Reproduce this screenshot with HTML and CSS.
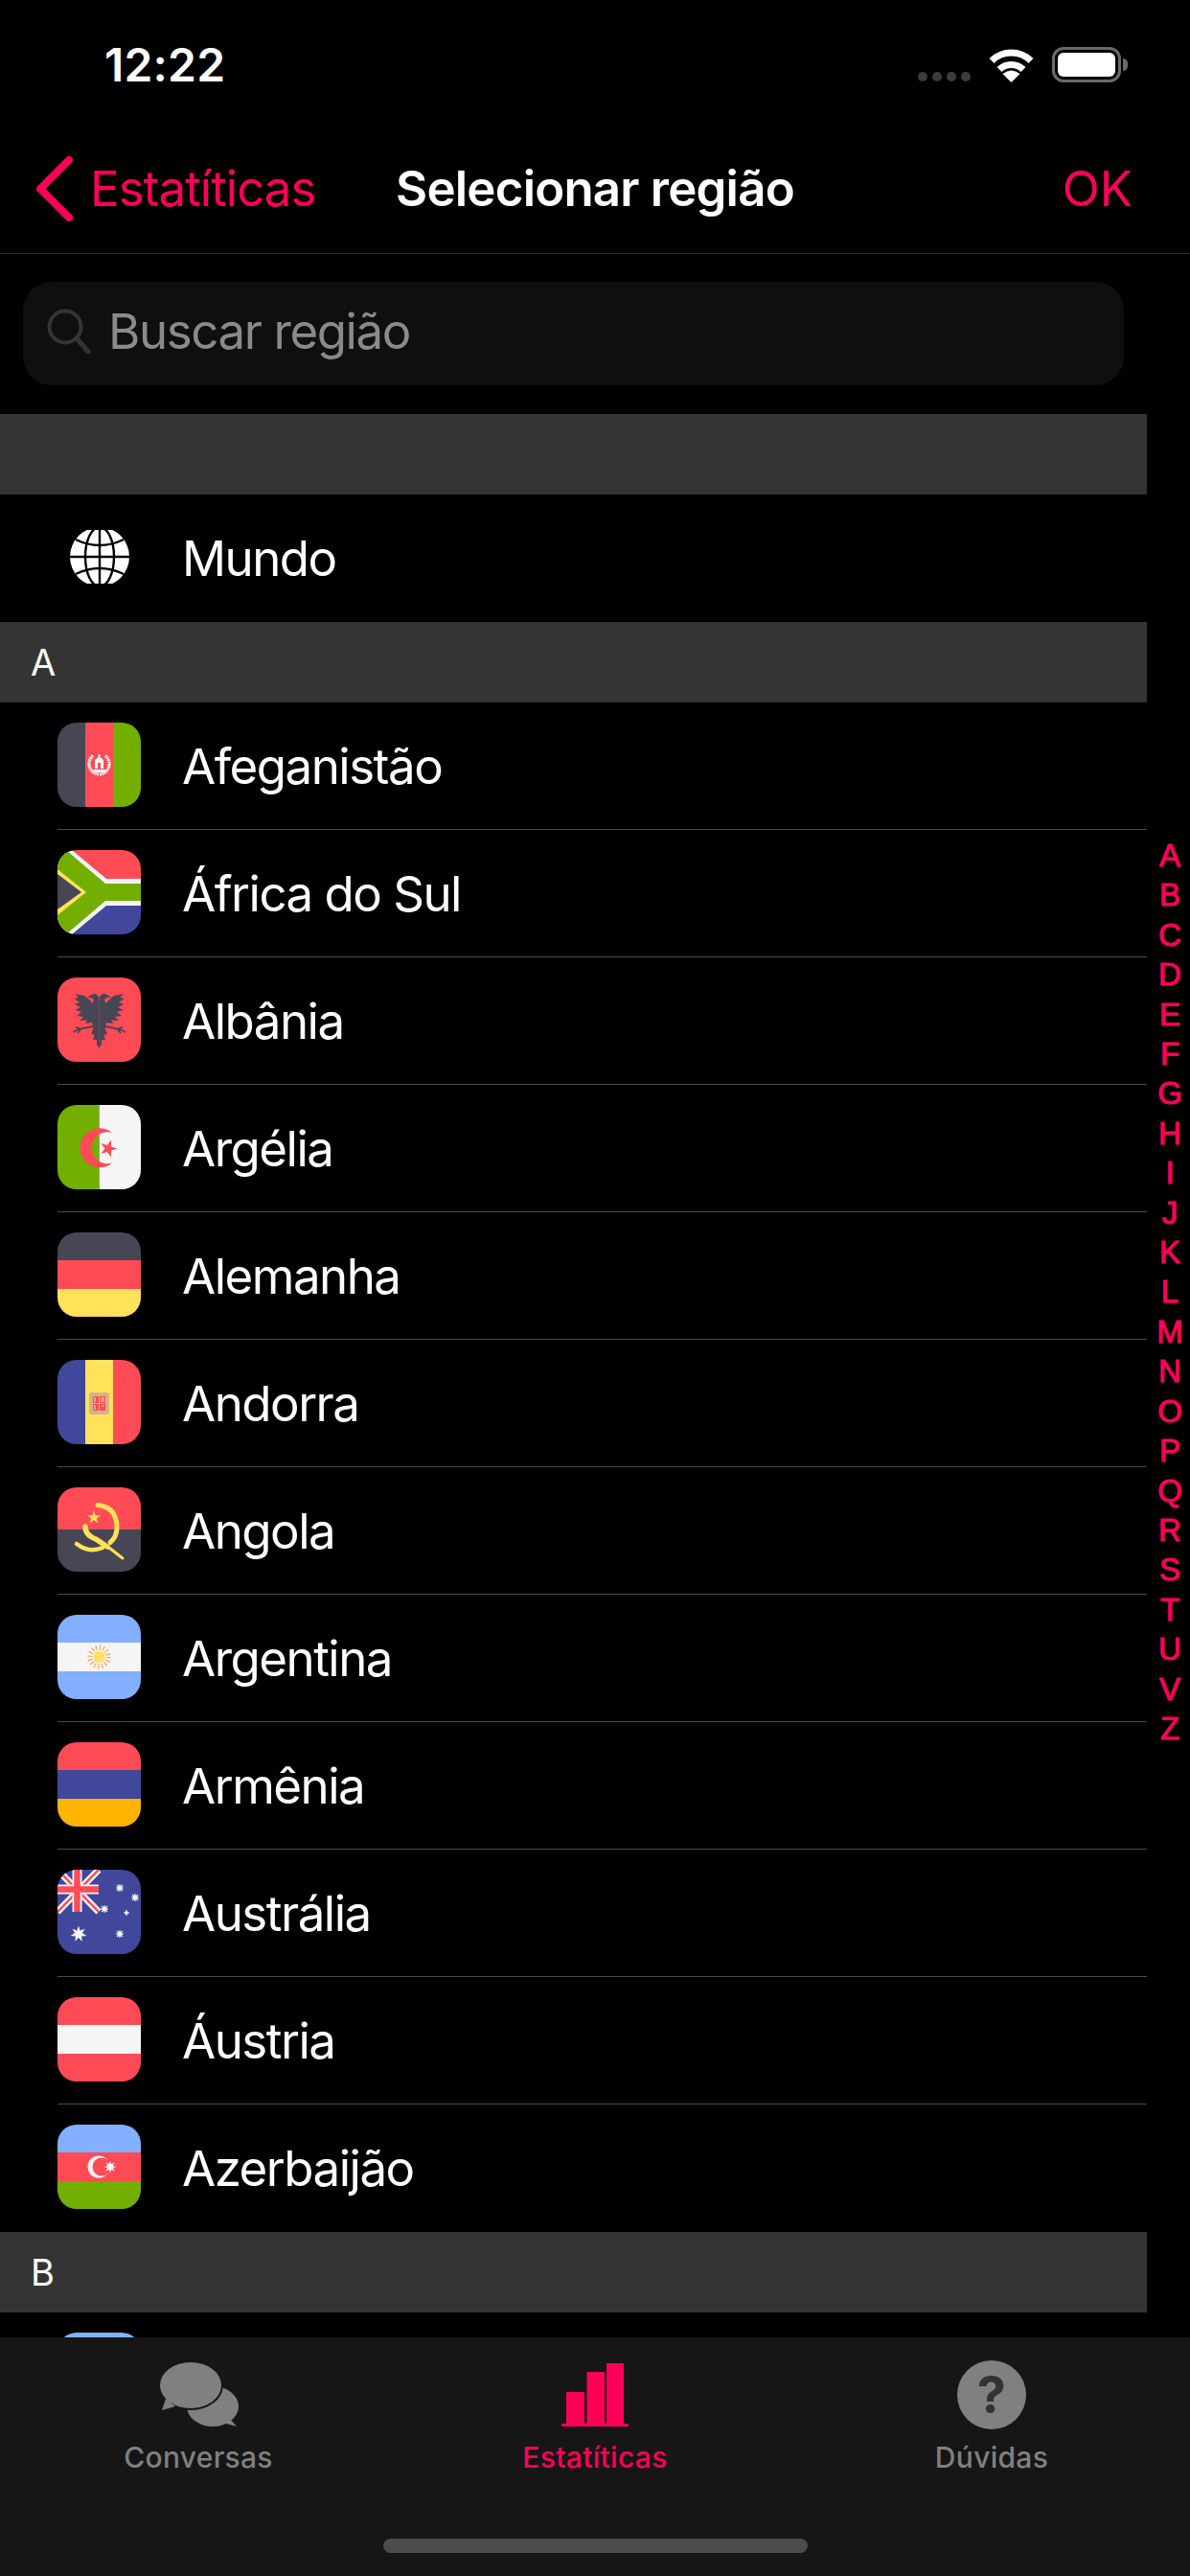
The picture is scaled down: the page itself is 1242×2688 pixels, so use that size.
FILE: index.html
```html
<!DOCTYPE html>
<html lang="pt-BR">
<head>
  <meta charset="UTF-8">
  <title>Selecionar região</title>
  <link rel="stylesheet" href="styles.css">
</head>
<body>
  <div class="screen">
    <div class="status-bar">
      <span class="time">12:22</span>
      <div class="status-icons">
        <div class="signal"><i></i><i></i><i></i><i></i></div>
        <svg class="wifi" viewBox="0 0 47 36" width="47" height="36">
          <path d="M3 13.5a29 29 0 0 1 41 0" fill="none" stroke="#fff" stroke-width="7"/>
          <path d="M11 22.5a18 18 0 0 1 25 0" fill="none" stroke="#fff" stroke-width="7"/>
          <path d="M23.5 36l-9-9q9-7 18 0z" fill="#fff"/>
        </svg>
        <div class="battery"><div class="battery-level"></div></div>
        <div class="battery-nub"></div>
      </div>
    </div>

    <header class="nav">
      <a class="nav-back">
        <svg viewBox="0 0 44 70" width="44" height="70">
          <path d="M36 5L6 35l30 30" fill="none" stroke="#ff0058" stroke-width="8" stroke-linecap="round" stroke-linejoin="round"/>
        </svg>
        <span>Estatíticas</span>
      </a>
      <h1 class="nav-title">Selecionar região</h1>
      <a class="nav-ok">OK</a>
    </header>

    <div class="search">
      <svg viewBox="0 0 46 48" width="46" height="48">
        <circle cx="19" cy="19" r="16.5" fill="none" stroke="#343436" stroke-width="4"/>
        <path d="M31 31l12 14" fill="none" stroke="#343436" stroke-width="5" stroke-linecap="round"/>
      </svg>
      <span>Buscar região</span>
    </div>

    <main class="list">
      <div class="section-head"></div>
      <div class="row row-last">
        <div class="flag-cell">
          <svg class="globe" viewBox="0 0 62 56" width="62" height="56">
            <circle cx="31" cy="28" r="31" fill="#fff"/>
            <g fill="none" stroke="#000" stroke-width="2.4">
              <path d="M31 0v56M0 28h62"/>
              <ellipse cx="31" cy="28" rx="15" ry="31"/>
              <path d="M6 10q25 12 50 0M6 46q25-12 50 0"/>
            </g>
          </svg>
        </div>
        <span class="row-name">Mundo</span>
      </div>

      <div class="section-head">A</div>

      <div class="row">
        <svg class="flag" viewBox="0 0 87 88">
          <rect width="29" height="88" fill="#464655"/>
          <rect x="29" width="29" height="88" fill="#ff4b55"/>
          <rect x="58" width="29" height="88" fill="#73af00"/>
          <path d="M37 34.5a11 11 0 0 0 6 19.5M50 34.5a11 11 0 0 1-6 19.5" fill="none" stroke="#f5f5f5" stroke-width="3.2" stroke-dasharray="1.8 .6"/>
          <path d="M42.5 33h2v3l3.5 3v9h-9v-9l3.5-3zM37 49h13v3H37z" fill="#f5f5f5"/>
          <rect x="42" y="42" width="3" height="6" fill="#ff4b55"/>
        </svg>
        <span class="row-name">Afeganistão</span>
      </div>

      <div class="row">
        <svg class="flag" viewBox="0 0 87 88">
          <rect width="87" height="44" fill="#ff4b55"/>
          <rect y="44" width="87" height="44" fill="#41479b"/>
          <polygon points="0,0 15,0 51,30 87,30 87,58 51,58 15,88 0,88" fill="#f5f5f5"/>
          <polygon points="0,0 9,0 50,35 87,35 87,53 50,53 9,88 0,88" fill="#73af00"/>
          <polygon points="0,20 30,44 0,68" fill="#ffe15a"/>
          <polygon points="0,25 25,44 0,62" fill="#464655"/>
        </svg>
        <span class="row-name">África do Sul</span>
      </div>

      <div class="row">
        <svg class="flag" viewBox="0 0 87 88">
          <rect width="87" height="88" fill="#ff4b55"/>
          <g id="eagle-half">
            <polygon points="43.5,24 43,20 40,17 36,17.5 31,21 35.5,21 38,23 37,27 33,23 28,19 18,17 22,21 17.5,22 23,26 17.5,28 24,31 18.5,34 25,36 20,40 27,41 23,45 31,44.5 28.5,48 36,47 37.5,53 35,59 38.5,59.5 37,65 41,65 41,70 43.5,74" fill="#464655"/>
            <path d="M37 51L22 54l-6 3M24 53.5l-5-1.5M24 54l-3 4" fill="none" stroke="#464655" stroke-width="1.8"/>
          </g>
          <use href="#eagle-half" transform="translate(87 0) scale(-1 1)"/>
        </svg>
        <span class="row-name">Albânia</span>
      </div>

      <div class="row">
        <svg class="flag" viewBox="0 0 87 88">
          <rect width="43.5" height="88" fill="#73af00"/>
          <rect x="43.5" width="43.5" height="88" fill="#f5f5f5"/>
          <path d="M57 29a20.5 20.5 0 1 0 0 31.5a16.5 16.5 0 1 1 0-31.5z" fill="#ff4b55"/>
          <polygon transform="translate(53 45.5) rotate(90) scale(9.5)" points="0,-1 .22,-.31 .95,-.31 .36,.12 .59,.81 0,.38 -.59,.81 -.36,.12 -.95,-.31 -.22,-.31" fill="#ff4b55"/>
        </svg>
        <span class="row-name">Argélia</span>
      </div>

      <div class="row">
        <svg class="flag" viewBox="0 0 87 88">
          <rect width="87" height="29" fill="#464655"/>
          <rect y="29" width="87" height="30" fill="#ff4b55"/>
          <rect y="59" width="87" height="29" fill="#ffe15a"/>
        </svg>
        <span class="row-name">Alemanha</span>
      </div>

      <div class="row">
        <svg class="flag" viewBox="0 0 87 88">
          <rect width="29" height="88" fill="#41479b"/>
          <rect x="29" width="29" height="88" fill="#ffe15a"/>
          <rect x="58" width="29" height="88" fill="#ff4b55"/>
          <rect x="33" y="34" width="21" height="23" rx="3" fill="#d2b48c"/>
          <rect x="37" y="38" width="6" height="7" fill="#ff4b55"/>
          <rect x="44" y="38" width="6" height="7" fill="#ff4b55"/>
          <rect x="37" y="46" width="6" height="7" fill="#ff4b55"/>
          <rect x="44" y="46" width="6" height="7" fill="#ff4b55"/>
          <path d="M39 39v5M46 39v5M48 39v5M39 47v5M46 48h3" stroke="#ffe15a" stroke-width="1.2"/>
        </svg>
        <span class="row-name">Andorra</span>
      </div>

      <div class="row">
        <svg class="flag" viewBox="0 0 87 88">
          <rect width="87" height="44" fill="#ff4b55"/>
          <rect y="44" width="87" height="44" fill="#464655"/>
          <polygon transform="translate(38 31.5) scale(7.5)" points="0,-1 .22,-.31 .95,-.31 .36,.12 .59,.81 0,.38 -.59,.81 -.36,.12 -.95,-.31 -.22,-.31" fill="#ffe15a"/>
          <g fill="none" stroke="#ffe15a" stroke-linecap="round">
            <path d="M42 18.5q20 2 20 24 0 9-7 15" stroke-width="5"/>
            <path d="M20 59q13 10 27 4" stroke-width="4.5"/>
            <path d="M29 41q0 9 11 13l12 8" stroke-width="5.5"/>
            <path d="M50 60l18 14" stroke-width="3"/>
          </g>
        </svg>
        <span class="row-name">Angola</span>
      </div>

      <div class="row">
        <svg class="flag" viewBox="0 0 87 88">
          <rect width="87" height="88" fill="#82afff"/>
          <rect y="29" width="87" height="30" fill="#f5f5f5"/>
          <circle cx="43.5" cy="44" r="9.5" fill="none" stroke="#ff9f4d" stroke-width="5.5" stroke-dasharray="1.1 2.63"/>
          <circle cx="43.5" cy="44" r="6" fill="#ffe15a"/>
        </svg>
        <span class="row-name">Argentina</span>
      </div>

      <div class="row">
        <svg class="flag" viewBox="0 0 87 88">
          <rect width="87" height="29" fill="#ff4b55"/>
          <rect y="29" width="87" height="30" fill="#41479b"/>
          <rect y="59" width="87" height="29" fill="#ffb400"/>
        </svg>
        <span class="row-name">Armênia</span>
      </div>

      <div class="row">
        <svg class="flag" viewBox="0 0 87 88">
          <rect width="87" height="88" fill="#41479b"/>
          <path d="M0 0l43 44M43 0L0 44" stroke="#f5f5f5" stroke-width="7"/>
          <path d="M0 0l43 44M43 0L0 44" stroke="#ff4b55" stroke-width="2.5"/>
          <path d="M20.5 0v44M0 20.5h43" stroke="#f5f5f5" stroke-width="10"/>
          <path d="M20.5 0v44M0 20.5h43" stroke="#ff4b55" stroke-width="6.5"/>
          <polygon points="22,58.5 23.7,63.4 28.6,61.7 25.9,66.1 30.3,68.9 25.1,69.5 25.7,74.7 22,71 18.3,74.7 18.9,69.5 13.7,68.9 18.1,66.1 15.4,61.7 20.3,63.4" fill="#f5f5f5"/>
          <g fill="#f5f5f5">
            <circle cx="65" cy="19" r="2.5"/>
            <circle cx="81" cy="29" r="2.5"/>
            <circle cx="49" cy="41" r="2.5"/>
            <circle cx="72" cy="45" r="1.8"/>
            <circle cx="65" cy="67" r="2.5"/>
          </g>
          <g stroke="#f5f5f5" stroke-width="1.1">
            <path d="M65 15v8M61 19h8M62 16l6 6M68 16l-6 6"/>
            <path d="M81 25v8M77 29h8M78 26l6 6M84 26l-6 6"/>
            <path d="M49 37v8M45 41h8M46 38l6 6M52 38l-6 6"/>
            <path d="M72 42v6M69 45h6"/>
            <path d="M65 63v8M61 67h8M62 64l6 6M68 64l-6 6"/>
          </g>
        </svg>
        <span class="row-name">Austrália</span>
      </div>

      <div class="row">
        <svg class="flag" viewBox="0 0 87 88">
          <rect width="87" height="88" fill="#ff4b55"/>
          <rect y="29" width="87" height="30" fill="#f5f5f5"/>
        </svg>
        <span class="row-name">Áustria</span>
      </div>

      <div class="row row-last">
        <svg class="flag" viewBox="0 0 87 88">
          <rect width="87" height="29" fill="#82afff"/>
          <rect y="29" width="87" height="30" fill="#ff4b55"/>
          <rect y="59" width="87" height="29" fill="#73af00"/>
          <circle cx="43" cy="44" r="11.5" fill="#f5f5f5"/>
          <circle cx="46" cy="44" r="9.5" fill="#ff4b55"/>
          <circle cx="55" cy="44" r="3.5" fill="#f5f5f5"/>
          <path d="M55 38.5v11M49.5 44h11M51 40l8 8M59 40l-8 8" stroke="#f5f5f5" stroke-width="1.2"/>
        </svg>
        <span class="row-name">Azerbaijão</span>
      </div>

      <div class="section-head">B</div>

      <div class="row">
        <svg class="flag" viewBox="0 0 87 88">
          <rect width="87" height="88" fill="#82afff"/>
        </svg>
      </div>
    </main>

    <nav class="index">
      <span>A</span><span>B</span><span>C</span><span>D</span><span>E</span><span>F</span>
      <span>G</span><span>H</span><span>I</span><span>J</span><span>K</span><span>L</span>
      <span>M</span><span>N</span><span>O</span><span>P</span><span>Q</span><span>R</span>
      <span>S</span><span>T</span><span>U</span><span>V</span><span>Z</span>
    </nav>

    <footer class="tabbar">
      <div class="tabs">
        <a class="tab">
          <div class="tab-icon">
            <svg viewBox="0 0 84 68" width="84" height="68">
              <ellipse cx="57" cy="46" rx="27" ry="21" fill="#808080"/>
              <path d="M74 58l8 9-14-4z" fill="#808080"/>
              <ellipse cx="34" cy="24" rx="32" ry="24" fill="#808080" stroke="#161616" stroke-width="4" paint-order="stroke"/>
              <path d="M8 38L4 50l14-4z" fill="#808080"/>
            </svg>
          </div>
          <span>Conversas</span>
        </a>
        <a class="tab tab-active">
          <div class="tab-icon">
            <svg viewBox="0 0 70 66" width="70" height="66">
              <path d="M5 30h19v33H5zM26.5 9H45v54H26.5zM47 0h18v63H47zM0 63h70v3H0z" fill="#ff0058"/>
            </svg>
          </div>
          <span>Estatíticas</span>
        </a>
        <a class="tab">
          <div class="tab-icon">
            <div class="help-icon">?</div>
          </div>
          <span>Dúvidas</span>
        </a>
      </div>
      <div class="home-indicator"></div>
    </footer>
  </div>
</body>
</html>
```

FILE: styles.css
```css
/* Reset */
* {
  margin: 0;
  padding: 0;
  box-sizing: border-box;
}

body {
  width: 1242px;
  height: 2688px;
  overflow: hidden;
  background-color: #000;
  color: #fff;
  font-family: Inter, "Noto Sans", sans-serif;
}

.screen {
  position: relative;
  display: flex;
  flex-direction: column;
  height: 2688px;
}

/* Status bar */
.status-bar {
  display: flex;
  justify-content: space-between;
  height: 132px;
  padding: 43px 65px 0 109px;
}

.time {
  font-size: 48px;
  font-weight: 600;
  line-height: 50px;
  letter-spacing: .2px;
}

.status-icons {
  display: flex;
  align-items: flex-end;
  height: 43px;
}

.signal {
  display: flex;
  gap: 5px;
  margin-right: 19px;
  padding-bottom: 1px;
}

.signal i {
  width: 10px;
  height: 10px;
  border-radius: 50%;
  background-color: #3c3c3c;
}

.wifi {
  margin-right: 19px;
}

.battery {
  width: 72px;
  height: 37px;
  padding: 3px;
  border: 3px solid #6a6a6a;
  border-radius: 12px;
}

.battery-level {
  height: 100%;
  border-radius: 6px;
  background-color: #fff;
}

.battery-nub {
  width: 5px;
  height: 13px;
  margin: 0 0 12px 2px;
  border-radius: 0 6px 6px 0;
  background-color: #6a6a6a;
}

/* Nav */
.nav {
  display: grid;
  grid-template-columns: 1fr auto 1fr;
  align-items: center;
  height: 133px;
  padding: 0 60px 3px;
  border-bottom: 1px solid #2c2c2c;
  font-size: 51px;
}

.nav-back {
  display: flex;
  align-items: center;
  gap: 14px;
  margin-left: -24px;
  color: #ff0058;
  letter-spacing: -1px;
}

.nav-title {
  font-size: 51px;
  font-weight: 600;
  letter-spacing: -.8px;
}

.nav-ok {
  justify-self: end;
  color: #ff0058;
}

/* Search */
.search {
  display: flex;
  align-items: center;
  gap: 18px;
  height: 108px;
  margin: 29px 69px 30px 24px;
  padding: 0 0 4px 25px;
  border-radius: 30px;
  background-color: #0f0f0f;
  color: #8a8a8e;
  font-size: 51px;
  letter-spacing: -1.4px;
}

.search span {
  margin-bottom: 2px;
}

/* List */
.list {
  flex: 1;
  overflow: hidden;
  width: 1197px;
}

.section-head {
  display: flex;
  align-items: center;
  height: 84px;
  padding-left: 32px;
  background-color: #343434;
  font-size: 38px;
}

.row {
  display: flex;
  align-items: flex-start;
  gap: 43px;
  height: 133px;
  margin-left: 60px;
  padding-top: 21px;
  border-bottom: 1px solid #4a4a4a;
}

.row-last {
  border-bottom: none;
}

.flag,
.flag-cell {
  flex: none;
  width: 87px;
  height: 88px;
}

.flag {
  border-radius: 20px;
}

.flag-cell {
  display: flex;
  align-items: center;
  justify-content: center;
}

.row-name {
  font-size: 51px;
  line-height: 92px;
  letter-spacing: -1.5px;
}

/* Alphabet index, floats over the list */
.index {
  position: absolute;
  top: 872px;
  right: 0;
  display: flex;
  flex-direction: column;
  width: 42px;
  color: #ff0058;
  font-family: "Liberation Sans", sans-serif;
  font-size: 33px;
  -webkit-text-stroke: 1px #ff0058;
  line-height: 41.4px;
  text-align: center;
}

/* Tab bar */
.tabbar {
  display: flex;
  flex-direction: column;
  justify-content: space-between;
  height: 249px;
  padding: 24px 0 24px;
  background-color: #161616;
}

.tabs {
  display: grid;
  grid-template-columns: repeat(3, 1fr);
}

.tab {
  display: flex;
  flex-direction: column;
  align-items: center;
  color: #808080;
  font-size: 30px;
  font-weight: 500;
  line-height: 36px;
  letter-spacing: .3px;
}

.tab-active {
  color: #ff0058;
}

.tab-icon {
  display: flex;
  align-items: center;
  justify-content: center;
  height: 72px;
  margin-bottom: 11px;
}

.help-icon {
  width: 72px;
  height: 72px;
  border-radius: 50%;
  background-color: #808080;
  color: #333;
  font-size: 54px;
  font-weight: 700;
  line-height: 72px;
  text-align: center;
}

.home-indicator {
  align-self: center;
  width: 443px;
  height: 15px;
  border-radius: 8px;
  background-color: #4c4c4c;
}
```
